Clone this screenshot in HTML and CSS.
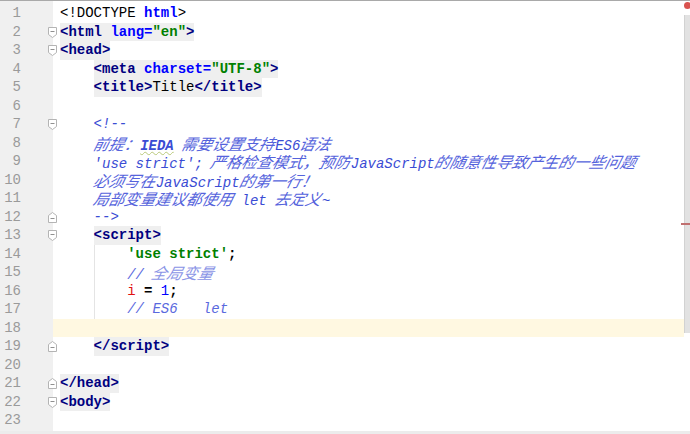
FILE: index.html
```html
<!DOCTYPE html>
<html lang="en">
<head>
    <meta charset="UTF-8">
    <title>Editor</title>
    <link rel="stylesheet" href="styles.css">
</head>
<body>
    <div class="editor">
        <div class="lines">
            <div class="row"><span class="num">1</span><span class="code">&lt;!DOCTYPE <b class="attr">html</b>&gt;</span></div>
            <div class="row"><span class="num">2</span><span class="fold open"></span><span class="code"><span class="tag">&lt;html <span class="attr">lang=</span><span class="val">"en"</span>&gt;</span></span></div>
            <div class="row"><span class="num">3</span><span class="fold open"></span><span class="code"><span class="tag">&lt;head&gt;</span></span></div>
            <div class="row"><span class="num">4</span><span class="code">    <span class="tag">&lt;meta <span class="attr">charset=</span><span class="val">"UTF-8"</span>&gt;</span></span></div>
            <div class="row"><span class="num">5</span><span class="code">    <span class="tag">&lt;title&gt;<span class="plain">Title</span>&lt;/title&gt;</span></span></div>
            <div class="row"><span class="num">6</span><span class="code"></span></div>
            <div class="row"><span class="num">7</span><span class="fold open"></span><span class="code comment">    &lt;!--</span></div>
            <div class="row"><span class="num">8</span><span class="code comment">    <span class="zh">前提：</span><span class="typo">IEDA</span> <span class="zh">需要设置支持</span>ES6<span class="zh">语法</span></span></div>
            <div class="row"><span class="num">9</span><span class="code comment">    'use strict'; <span class="zh">严格检查模式，预防</span>JavaScript<span class="zh">的随意性导致产生的一些问题</span></span></div>
            <div class="row"><span class="num">10</span><span class="code comment">    <span class="zh">必须写在</span>JavaScript<span class="zh">的第一行！</span></span></div>
            <div class="row"><span class="num">11</span><span class="code comment">    <span class="zh">局部变量建议都使用</span> let <span class="zh">去定义</span>~</span></div>
            <div class="row"><span class="num">12</span><span class="fold close"></span><span class="code comment">    --&gt;</span></div>
            <div class="row"><span class="num">13</span><span class="fold open"></span><span class="code">    <span class="tag">&lt;script&gt;</span></span></div>
            <div class="row guide"><span class="num">14</span><span class="code">        <span class="str">'use strict'</span><b>;</b></span></div>
            <div class="row guide"><span class="num">15</span><span class="code line-comment">        // <span class="zh">全局变量</span></span></div>
            <div class="row guide"><span class="num">16</span><span class="code">        <span class="undef">i</span> <b>=</b> <span class="number">1</span><b>;</b></span></div>
            <div class="row guide"><span class="num">17</span><span class="code line-comment">        // ES6   let</span></div>
            <div class="row caret"><span class="num">18</span><span class="code"></span></div>
            <div class="row"><span class="num">19</span><span class="fold close"></span><span class="code">    <span class="tag">&lt;/script&gt;</span></span></div>
            <div class="row"><span class="num">20</span><span class="code"></span></div>
            <div class="row"><span class="num">21</span><span class="fold close"></span><span class="code"><span class="tag">&lt;/head&gt;</span></span></div>
            <div class="row"><span class="num">22</span><span class="fold open"></span><span class="code"><span class="tag">&lt;body&gt;</span></span></div>
            <div class="row"><span class="num">23</span><span class="code"></span></div>
        </div>
        <div class="stripe">
            <span class="error-dot"></span>
            <div class="track">
                <span class="mark"></span>
            </div>
        </div>
    </div>
    <div class="status"></div>
</body>
</html>
```

FILE: styles.css
```css
body {
    margin: 0;
    width: 690px;
    height: 434px;
    overflow: hidden;
    background: #ffffff;
    font-family: "Liberation Mono", "Noto Sans CJK SC", monospace;
    font-size: 14px;
}
.editor {
    display: flex;
    height: 431px;
    border-top: 1px solid #a9a9a9;
    box-sizing: border-box;
}
.lines {
    flex: 1;
    padding-top: 3px;
    background: linear-gradient(to right, #f0f0f0 53px, #ffffff 53px);
}
.row {
    position: relative;
    display: flex;
    height: 18.5px;
    line-height: 18.5px;
    white-space: pre;
}
.num {
    width: 21px;
    padding-right: 32px;
    text-align: right;
    color: #9a9a9a;
    flex-shrink: 0;
}
.code {
    flex: 1;
    padding-left: 7px;
    color: #000000;
}
.fold {
    position: absolute;
    left: 48px;
    top: 4px;
    width: 9px;
    height: 11px;
    background-repeat: no-repeat;
}
.fold.open {
    background-image: url("data:image/svg+xml;utf8,<svg xmlns='http://www.w3.org/2000/svg' width='9' height='11'><path d='M0.5 0.5h8v7l-4 3l-4-3z' fill='white' stroke='%23b4b4b4'/><path d='M2.5 4.5h4' stroke='%23909090'/></svg>");
}
.fold.close {
    background-image: url("data:image/svg+xml;utf8,<svg xmlns='http://www.w3.org/2000/svg' width='9' height='11'><path d='M0.5 10.5h8v-7l-4-3l-4 3z' fill='white' stroke='%23b4b4b4'/><path d='M2.5 6.5h4' stroke='%23909090'/></svg>");
}
.tag {
    display: inline-block;
    background: #efefef;
    color: #000080;
    font-weight: bold;
}
.attr {
    color: #0000ff;
    font-weight: bold;
}
.val {
    color: #008000;
    font-weight: bold;
}
.plain {
    color: #000000;
    font-weight: normal;
}
.comment {
    color: #3a4cd4;
    font-style: italic;
}
.zh {
    display: inline-block;
    height: 18.5px;
    font-family: "Noto Sans CJK SC", sans-serif;
    font-size: 15.5px;
    line-height: 18.5px;
    font-weight: normal;
    color: #5563dc;
    transform: skewX(-14deg);
}
.typo {
    font-weight: bold;
    text-decoration: underline wavy #b8c878;
    text-decoration-thickness: 1px;
    text-underline-offset: 1px;
}
.line-comment {
    color: #5a69de;
    font-style: italic;
}
.line-comment .zh {
    color: #8a94e6;
}
.str {
    color: #008000;
    font-weight: bold;
}
.undef {
    color: #e01010;
}
.number {
    color: #0000ff;
}
.guide .code {
    background: linear-gradient(#e4e4e4, #e4e4e4) no-repeat 41px 0 / 1px 100%;
}
.caret .code {
    background: #fff8e1;
}
.stripe {
    width: 6px;
    padding-top: 1px;
    display: flex;
    flex-direction: column;
    align-items: flex-end;
}
.error-dot {
    width: 7px;
    height: 7px;
    margin-right: -1px;
    border-radius: 50%;
    background: #d9534f;
}
.track {
    position: relative;
    width: 5px;
    height: 318px;
    margin-top: 6px;
    background: #e2e2e2;
    border-left: 1px solid #d2d2d2;
}
.mark {
    position: absolute;
    top: 208px;
    right: 0;
    width: 9px;
    height: 2px;
    background: #c07070;
}
.status {
    height: 3px;
    background: #ececec;
}
```
